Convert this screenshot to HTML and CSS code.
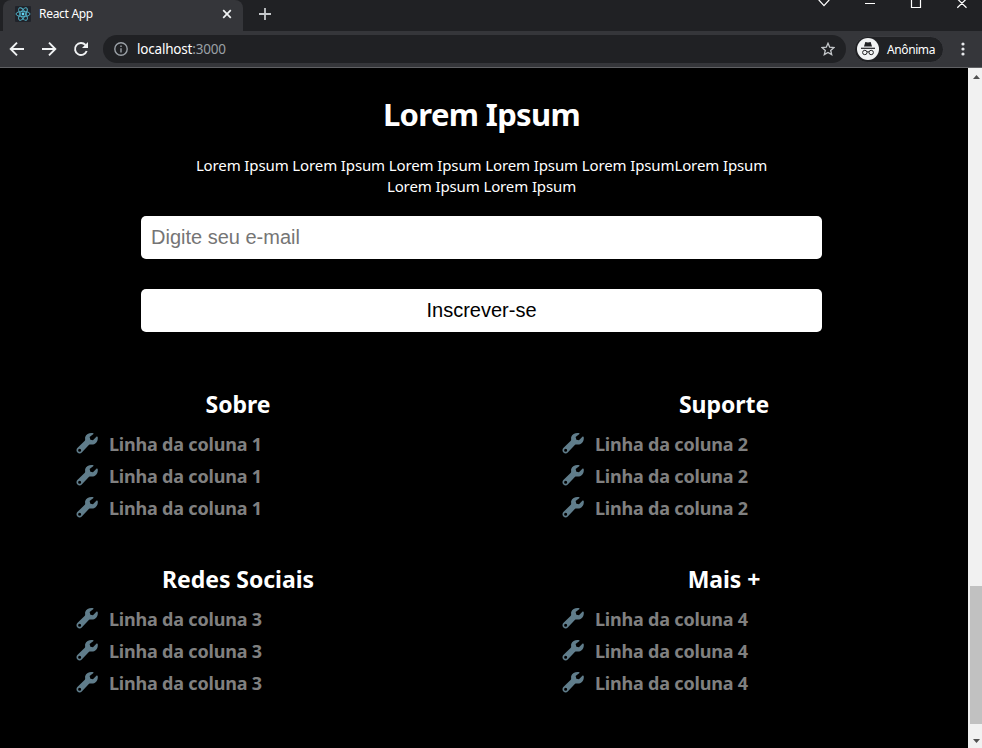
FILE: index.html
```html
<!DOCTYPE html>
<html lang="pt-BR">
<head>
<meta charset="utf-8">
<title>React App</title>
<link rel="stylesheet" href="styles.css">
</head>
<body>
<svg class="defs" width="0" height="0">
  <symbol id="wrench" viewBox="0 0 24 24">
    <path fill-rule="evenodd" d="M18.200 1.200C15 .3 10.600 1.700 9.600 5.200 9.200 6.800 10 8.100 9.200 9.200L1.400 16.700C.2 18 .2 20 1.500 21.400c1.400 1.300 3.400 1.200 4.500-.1L13.400 13.500c1.300-1.100 3 .2 5.400-.7 3-1.100 4.500-4.500 3.800-7.800l-1.100-.2-3.800 3.700-2.700-.4-.8-2.900 4-3.200zM3.800 17.500a1.600 1.600 0 1 1 0 3.200 1.600 1.600 0 0 1 0-3.200z"/>
  </symbol>
</svg>
<header class="browser">
  <div class="tabs">
    <div class="stub"></div>
    <div class="tab">
      <svg class="favicon" width="16" height="16" viewBox="0 0 16 16"><rect width="16" height="16" rx="1" fill="#20232a"/><g fill="none" stroke="#53b5cb" stroke-width=".9"><ellipse cx="8" cy="8" rx="7" ry="2.700"/><ellipse cx="8" cy="8" rx="7" ry="2.700" transform="rotate(60 8 8)"/><ellipse cx="8" cy="8" rx="7" ry="2.700" transform="rotate(120 8 8)"/></g><circle cx="8" cy="8" r="1.400" fill="#61dafb"/></svg>
      <span class="tab-title">React App</span>
      <svg class="tab-close" width="10" height="10" viewBox="0 0 10 10"><path d="M1.200 1.200l7.600 7.600M8.800 1.200L1.200 8.800" stroke="#f1f3f4" stroke-width="1.700"/></svg>
    </div>
    <svg class="plus" width="12" height="12" viewBox="0 0 12 12"><path d="M6 0v12M0 6h12" stroke="#c5c8cb" stroke-width="1.800"/></svg>
    <svg class="window" width="152" height="10" viewBox="0 0 152 10" fill="none" stroke="#fff"><path d="M.7-.2L6 5.700 11.300-.2M47 3.500h10M93.500-2v9.500h9V-2M139.300-1.200l9.200 9M148.500-1.200l-9.200 9" stroke-width="1.200"/></svg>
  </div>
  <div class="toolbar">
    <svg class="nav" width="90" height="16" viewBox="0 0 90 16" fill="none" stroke="#f1f3f4" stroke-width="1.900"><path d="M16 8H3M9 1.700L2.700 8 9 14.300M34 8h13M41 1.700L47.300 8 41 14.300M78.700 10A6 6 0 1 1 77.500 4"/><path d="M80 1v6h-6z" fill="#f1f3f4" stroke="none"/></svg>
    <div class="address">
      <svg width="14" height="14" viewBox="0 0 14 14" fill="none" stroke="#9aa0a6" stroke-width="1.400"><circle cx="7" cy="7" r="6.200"/><path d="M7 6.200v4.300M7 3.500V5"/></svg>
      <span class="url">localhost<span class="port">:3000</span></span>
      <svg class="star" width="14" height="14" viewBox="0 0 14 14"><path d="M7 1.300l1.700 3.900 4.200.4-3.200 2.800 1 4.200L7 10.400l-3.700 2.200 1-4.200L1.100 5.600l4.200-.4z" fill="none" stroke="#c5c8cb" stroke-width="1.300"/></svg>
    </div>
    <div class="profile">
      <svg width="22" height="22" viewBox="0 0 22 22"><circle cx="11" cy="11" r="11" fill="#f1f3f4"/><path d="M7 8.500L8.300 4l2.700.6 2.700-.6L15 8.500z" fill="#202124"/><path d="M4 10.300h14" stroke="#202124" stroke-width="1.200"/><g fill="none" stroke="#202124"><circle cx="7.800" cy="14.500" r="2.200"/><circle cx="14.200" cy="14.500" r="2.200"/><path d="M10 14q1-.6 2 0"/></g></svg>
      <span>Anônima</span>
    </div>
    <svg class="menu" width="4" height="14" viewBox="0 0 4 14" fill="#e8eaed"><circle cx="2" cy="2" r="1.600"/><circle cx="2" cy="7" r="1.600"/><circle cx="2" cy="12" r="1.600"/></svg>
  </div>
</header>
<div class="viewport">
  <main class="page">
    <h1>Lorem Ipsum</h1>
    <p class="intro">Lorem Ipsum Lorem Ipsum Lorem Ipsum Lorem Ipsum Lorem IpsumLorem Ipsum<br>Lorem Ipsum Lorem Ipsum</p>
    <form class="signup">
      <input type="email" placeholder="Digite seu e-mail">
      <button type="button">Inscrever-se</button>
    </form>
    <footer class="columns">
      <section><h2>Sobre</h2><ul>
        <li><svg><use href="#wrench"/></svg><span>Linha da coluna 1</span></li>
        <li><svg><use href="#wrench"/></svg><span>Linha da coluna 1</span></li>
        <li><svg><use href="#wrench"/></svg><span>Linha da coluna 1</span></li></ul></section>
      <section><h2>Suporte</h2><ul>
        <li><svg><use href="#wrench"/></svg><span>Linha da coluna 2</span></li>
        <li><svg><use href="#wrench"/></svg><span>Linha da coluna 2</span></li>
        <li><svg><use href="#wrench"/></svg><span>Linha da coluna 2</span></li></ul></section>
      <section><h2>Redes Sociais</h2><ul>
        <li><svg><use href="#wrench"/></svg><span>Linha da coluna 3</span></li>
        <li><svg><use href="#wrench"/></svg><span>Linha da coluna 3</span></li>
        <li><svg><use href="#wrench"/></svg><span>Linha da coluna 3</span></li></ul></section>
      <section><h2>Mais +</h2><ul>
        <li><svg><use href="#wrench"/></svg><span>Linha da coluna 4</span></li>
        <li><svg><use href="#wrench"/></svg><span>Linha da coluna 4</span></li>
        <li><svg><use href="#wrench"/></svg><span>Linha da coluna 4</span></li></ul></section>
    </footer>
  </main>
  <div class="scrollbar">
    <svg width="7" height="4" viewBox="0 0 7 4"><path d="M0 4L3.500 0 7 4z" fill="#505050"/></svg>
    <div class="thumb"></div>
    <svg width="7" height="4" viewBox="0 0 7 4"><path d="M0 0L3.500 4 7 0z" fill="#505050"/></svg>
  </div>
</div>
</body>
</html>
```
FILE: styles.css
```css
* { box-sizing: border-box; }
body { margin: 0; width: 982px; height: 748px; overflow: hidden; background: #000; font-family: "Noto Sans", sans-serif; color: #fff; }
svg { flex: none; display: block; }
.defs { position: absolute; }
.browser { height: 68px; background: #35363a; border-bottom: 1px solid #606164; }
.tabs { display: flex; height: 31px; background: #202124; }
.stub { width: 3px; background: #202124; border-bottom-right-radius: 3px; }
.tab { display: flex; width: 240px; height: 31px; padding: 6px 11px 0 12px; background: #35363a; border-radius: 8px 8px 0 0; }
.tab-title { margin: -1px 0 0 8px; font-size: 12px; line-height: 17px; letter-spacing: -.3px; white-space: nowrap; }
.tab-close { margin: 3px 0 0 auto; }
.plus { margin: 8px 0 0 16px; }
.window { margin: 0 12px 0 auto; }
.toolbar { display: flex; align-items: center; height: 36px; }
.nav { margin-left: 8px; }
.address { display: flex; align-items: center; width: 743px; height: 28px; margin-left: 5px; padding: 0 11px; border-radius: 14px; background: #202124; }
.url { margin-left: 9px; font-size: 13.500px; line-height: 20px; letter-spacing: -.2px; }
.port { color: #9aa0a6; }
.star { margin-left: auto; }
.profile { display: flex; align-items: center; width: 90px; height: 27px; margin-left: 8px; padding-left: 2px; border: 1px solid #3a3b3f; border-radius: 14px; background: #202124; font-size: 12px; }
.profile span { margin-left: 8px; letter-spacing: -.4px; white-space: nowrap; }
.menu { margin-left: 17px; }
.viewport { display: flex; height: 680px; }
.page { flex: 1; min-width: 0; padding: 25px 5px 0 0; text-align: center; }
h1 { margin: 0; font-size: 31px; line-height: 43px; letter-spacing: -.65px; }
.intro { margin: 19px 0 0; font-size: 15px; line-height: 21px; letter-spacing: -.12px; white-space: nowrap; }
.signup { display: flex; flex-direction: column; gap: 30px; width: 681px; margin: 19px auto 0; }
.signup input, .signup button { width: 100%; height: 43px; padding: 0 10px; border: 0; border-radius: 5px; background: #fff; color: #000; font: 20px "Liberation Sans", sans-serif; }
.signup input::placeholder { color: #757575; opacity: 1; }
.columns { display: grid; grid-template-columns: 486px 486px; row-gap: 47px; width: 972px; margin: 56px 0 0 -5px; }
.columns section { height: 128px; }
h2 { margin: 0; font-size: 23px; line-height: 32px; letter-spacing: -.05px; }
ul { margin: 8px 0 0; padding: 0 0 0 80.500px; list-style: none; }
li { display: flex; align-items: center; height: 32px; color: gray; font-size: 18px; font-weight: 700; line-height: 32px; letter-spacing: -.2px; }
li svg { width: 23px; height: 23px; margin-top: -1px; fill: #607d8b; }
li span { margin-left: 10.500px; white-space: nowrap; }
.scrollbar { display: flex; flex: none; flex-direction: column; align-items: center; width: 14px; padding: 7px 0 5px 2px; background: #f1f1f1; }
.thumb { width: 12px; height: 138px; margin: auto 0 15px; background: #c1c1c1; }
```
